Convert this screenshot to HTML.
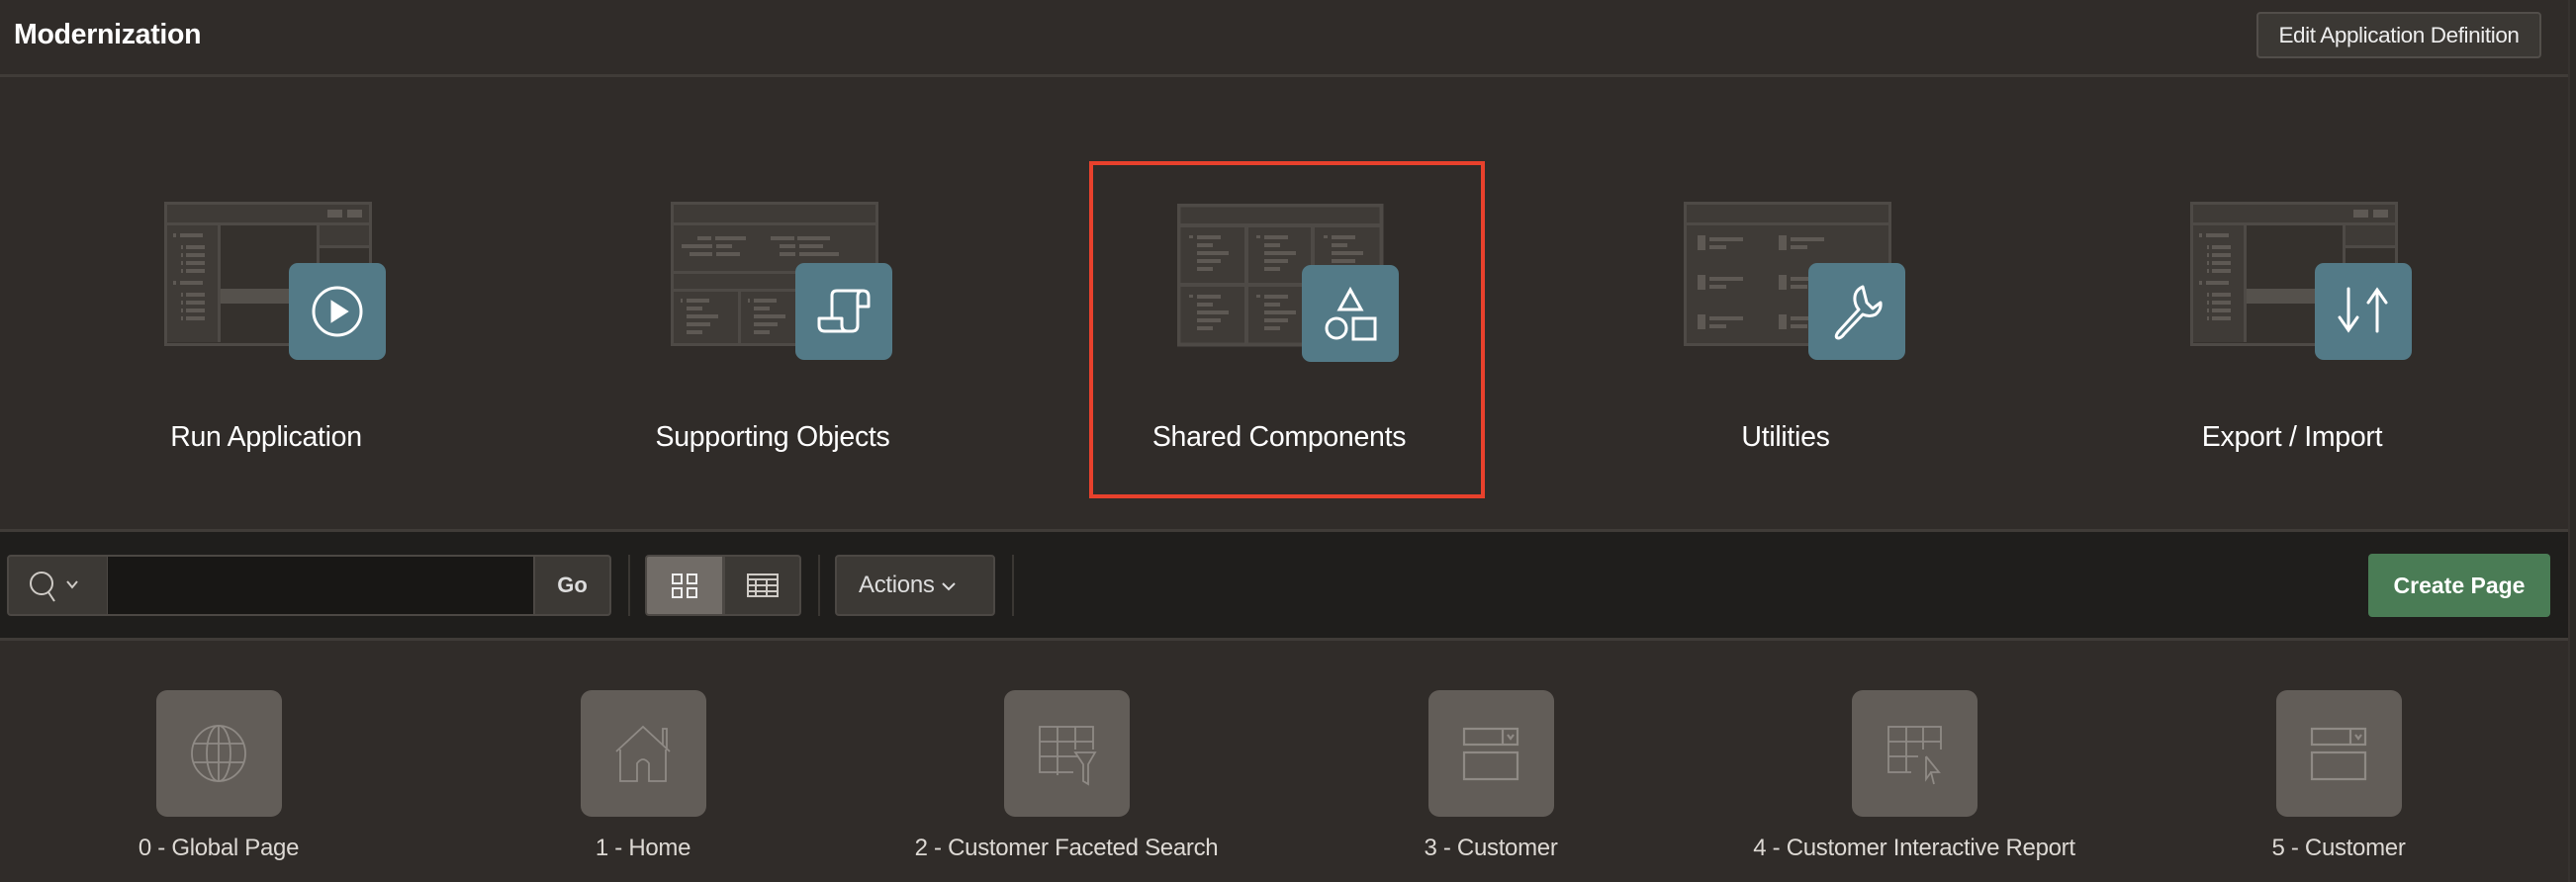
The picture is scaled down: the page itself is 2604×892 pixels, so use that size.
<!DOCTYPE html>
<html><head><meta charset="utf-8"><style>
*{margin:0;padding:0;box-sizing:border-box}
body{width:2604px;height:892px;background:#302c29;font-family:"Liberation Sans",sans-serif;position:relative;overflow:hidden;color:#fff}
.abs{position:absolute}
.hdr-line{left:0;top:75px;width:2596px;height:3px;background:#403c38}
.title{left:14px;top:19px;font-size:28.5px;font-weight:bold;letter-spacing:-0.3px}
.editbtn{left:2281px;top:12px;width:288px;height:47px;background:#3b3834;border:2px solid #524e4a;border-radius:4px;font-size:22.5px;color:#eee;text-align:center;line-height:43px;letter-spacing:-0.4px}
.bigcol{width:512px;top:0}
.bigcol .lbl{position:absolute;top:426px;width:512px;text-align:center;font-size:28.5px;letter-spacing:-0.3px}
.win{position:absolute;left:153px;top:204px}
.tile{position:absolute;left:279px;top:266px;width:98px;height:98px;background:#537a87;border-radius:9px}
.red{left:1101px;top:163px;width:400px;height:341px;border:4px solid #e8412c}
.toolbar{left:0;top:535px;width:2596px;height:113px;background:#1f1e1c;border-top:3px solid #403c38;border-bottom:3px solid #403c38}
.btn{position:absolute;top:561px;height:62px;background:#3c3935;border:2px solid #4c4844;border-radius:4px}
.sep{position:absolute;top:561px;width:2px;height:62px;background:#3a3733}
.pcol{position:absolute;top:698px;width:428px}
.ptile{position:absolute;left:151px;top:0;width:127px;height:128px;background:#625d58;border-radius:11px}
.plbl{position:absolute;top:146px;width:428px;text-align:center;font-size:24px;color:#ddd9d4;letter-spacing:-0.3px}
.scroll{left:2596px;top:0;width:8px;height:892px;background:#2e2b28;border-left:2px solid #36322f}
</style></head><body>
<div class="abs title">Modernization</div>
<div class="abs editbtn">Edit Application Definition</div>
<div class="abs hdr-line"></div>

<!-- Run Application -->
<div class="abs bigcol" style="left:13px">
<svg class="win" width="210" height="146" viewBox="0 0 210 146">
<rect x="1.5" y="1.5" width="207" height="143" fill="#35312d" stroke="#4e4a46" stroke-width="3"/>
<rect x="3" y="3" width="204" height="18" fill="#3f3b37"/><rect x="3" y="21" width="204" height="3" fill="#4e4a46"/>
<rect x="165" y="8" width="15" height="8" fill="#5e5954"/><rect x="185" y="8" width="15" height="8" fill="#5e5954"/>
<rect x="3" y="24" width="51" height="118" fill="#3f3b37"/><rect x="54" y="24" width="3" height="118" fill="#4e4a46"/>
<rect x="154" y="24" width="3" height="118" fill="#4e4a46"/><rect x="157" y="24" width="50" height="20" fill="#3f3b37"/><rect x="157" y="44" width="50" height="3" fill="#4e4a46"/>
<rect x="57" y="88" width="97" height="15" fill="#55514c"/>
<g fill="#5e5954"><rect x="9" y="32" width="3" height="4"/><rect x="16" y="32" width="23" height="4"/><rect x="9" y="80" width="3" height="4"/><rect x="16" y="80" width="23" height="4"/>
<rect x="17" y="44" width="2" height="4"/><rect x="22" y="44" width="19" height="4"/><rect x="17" y="52" width="2" height="4"/><rect x="22" y="52" width="19" height="4"/><rect x="17" y="60" width="2" height="4"/><rect x="22" y="60" width="19" height="4"/><rect x="17" y="68" width="2" height="4"/><rect x="22" y="68" width="19" height="4"/>
<rect x="17" y="92" width="2" height="4"/><rect x="22" y="92" width="19" height="4"/><rect x="17" y="100" width="2" height="4"/><rect x="22" y="100" width="19" height="4"/><rect x="17" y="108" width="2" height="4"/><rect x="22" y="108" width="19" height="4"/><rect x="17" y="116" width="2" height="4"/><rect x="22" y="116" width="19" height="4"/></g>
</svg>
<div class="tile"><svg width="98" height="98" viewBox="0 0 98 98" fill="none" stroke="#fff" stroke-width="3"><circle cx="49" cy="49" r="24"/><path d="M44 40 L58 49 L44 58 Z" fill="#fff"/></svg></div>
<div class="lbl">Run Application</div></div>

<!-- Supporting Objects -->
<div class="abs bigcol" style="left:525px">
<svg class="win" width="210" height="146" viewBox="0 0 210 146">
<rect x="1.5" y="1.5" width="207" height="143" fill="#3f3b37" stroke="#4e4a46" stroke-width="3"/>
<rect x="3" y="21" width="204" height="3" fill="#4e4a46"/><rect x="3" y="70" width="204" height="3" fill="#4e4a46"/><rect x="3" y="88" width="204" height="3" fill="#4e4a46"/><rect x="68" y="91" width="3" height="52" fill="#4e4a46"/>
<g fill="#5e5954"><rect x="27" y="35" width="14" height="4"/><rect x="45" y="35" width="31" height="4"/><rect x="101" y="35" width="24" height="4"/><rect x="128" y="35" width="33" height="4"/>
<rect x="11" y="43" width="31" height="4"/><rect x="46" y="43" width="16" height="4"/><rect x="110" y="43" width="16" height="4"/><rect x="130" y="43" width="24" height="4"/>
<rect x="19" y="51" width="23" height="4"/><rect x="46" y="51" width="24" height="4"/><rect x="110" y="51" width="16" height="4"/><rect x="130" y="51" width="40" height="4"/>
<rect x="10" y="98" width="2" height="4"/><rect x="16" y="98" width="23" height="4"/><rect x="16" y="106" width="16" height="4"/><rect x="16" y="114" width="32" height="4"/><rect x="16" y="122" width="24" height="4"/><rect x="16" y="130" width="16" height="4"/>
<rect x="78" y="98" width="2" height="4"/><rect x="84" y="98" width="23" height="4"/><rect x="84" y="106" width="16" height="4"/><rect x="84" y="114" width="32" height="4"/><rect x="84" y="122" width="24" height="4"/><rect x="84" y="130" width="16" height="4"/></g>
</svg>
<div class="tile"><svg width="98" height="98" viewBox="0 0 98 98" fill="none" stroke="#fff" stroke-width="3" stroke-linejoin="round"><path d="M37 56 V33 Q37 28 42 28 H68 Q74 28 74 34 V44 H63"/><path d="M63 34 Q63 28 68 28"/><path d="M63 34 V63 Q63 69 57 69 H30 Q24 69 24 63 V56 H47 V63 Q47 69 53 69"/></svg></div>
<div class="lbl">Supporting Objects</div></div>

<!-- Shared Components -->
<div class="abs bigcol" style="left:1037px">
<svg class="win" style="top:206px" width="210" height="146" viewBox="0 0 210 146">
<rect x="1.5" y="1.5" width="205" height="141" fill="#3f3b37" stroke="#4e4a46" stroke-width="4"/>
<rect x="3" y="20" width="204" height="4" fill="#4e4a46"/><rect x="3" y="80" width="204" height="4" fill="#4e4a46"/><rect x="68" y="22" width="4" height="120" fill="#4e4a46"/><rect x="135" y="22" width="4" height="120" fill="#4e4a46"/>
<g fill="#5e5954" id="cl"><rect x="12" y="32" width="4" height="3"/><rect x="20" y="32" width="24" height="4"/><rect x="20" y="40" width="16" height="4"/><rect x="20" y="48" width="32" height="4"/><rect x="20" y="56" width="24" height="4"/><rect x="20" y="64" width="16" height="4"/></g>
<use href="#cl" x="68"/><use href="#cl" x="136"/><use href="#cl" y="60"/><use href="#cl" x="68" y="60"/>
</svg>
<div class="tile" style="left:279px;top:268px"><svg width="98" height="98" viewBox="0 0 98 98" fill="none" stroke="#fff" stroke-width="3"><path d="M49 25 L60 45 H38 Z"/><circle cx="35" cy="64" r="10"/><rect x="52" y="54" width="22" height="21"/></svg></div>
<div class="lbl">Shared Components</div></div>

<!-- Utilities -->
<div class="abs bigcol" style="left:1549px">
<svg class="win" width="210" height="146" viewBox="0 0 210 146">
<rect x="1.5" y="1.5" width="207" height="143" fill="#3f3b37" stroke="#4e4a46" stroke-width="3"/>
<rect x="3" y="21" width="204" height="3" fill="#4e4a46"/>
<g fill="#5e5954" id="ur"><rect x="14" y="34" width="8" height="15"/><rect x="26" y="36" width="34" height="4"/><rect x="26" y="44" width="17" height="4"/><rect x="96" y="34" width="8" height="15"/><rect x="108" y="36" width="34" height="4"/><rect x="108" y="44" width="17" height="4"/></g>
<use href="#ur" y="40"/><use href="#ur" y="80"/>
</svg>
<div class="tile"><svg width="98" height="98" viewBox="0 0 98 98" fill="none" stroke="#fff" stroke-width="3" stroke-linejoin="round"><path d="M55 24 Q46 28 47 38 Q48 44 51 47 L30 70 Q26 76 31 76 Q34 75 36 72 L55 52 Q62 55 68 52 Q74 47 73 40 L65 46 L59 40 Z"/></svg></div>
<div class="lbl">Utilities</div></div>

<!-- Export / Import -->
<div class="abs bigcol" style="left:2061px">
<svg class="win" width="210" height="146" viewBox="0 0 210 146">
<rect x="1.5" y="1.5" width="207" height="143" fill="#35312d" stroke="#4e4a46" stroke-width="3"/>
<rect x="3" y="3" width="204" height="18" fill="#3f3b37"/><rect x="3" y="21" width="204" height="3" fill="#4e4a46"/>
<rect x="165" y="8" width="15" height="8" fill="#5e5954"/><rect x="185" y="8" width="15" height="8" fill="#5e5954"/>
<rect x="3" y="24" width="51" height="118" fill="#3f3b37"/><rect x="54" y="24" width="3" height="118" fill="#4e4a46"/>
<rect x="154" y="24" width="3" height="118" fill="#4e4a46"/><rect x="157" y="24" width="50" height="20" fill="#3f3b37"/><rect x="157" y="44" width="50" height="3" fill="#4e4a46"/>
<rect x="57" y="88" width="97" height="15" fill="#55514c"/>
<g fill="#5e5954"><rect x="9" y="32" width="3" height="4"/><rect x="16" y="32" width="23" height="4"/><rect x="9" y="80" width="3" height="4"/><rect x="16" y="80" width="23" height="4"/>
<rect x="17" y="44" width="2" height="4"/><rect x="22" y="44" width="19" height="4"/><rect x="17" y="52" width="2" height="4"/><rect x="22" y="52" width="19" height="4"/><rect x="17" y="60" width="2" height="4"/><rect x="22" y="60" width="19" height="4"/><rect x="17" y="68" width="2" height="4"/><rect x="22" y="68" width="19" height="4"/>
<rect x="17" y="92" width="2" height="4"/><rect x="22" y="92" width="19" height="4"/><rect x="17" y="100" width="2" height="4"/><rect x="22" y="100" width="19" height="4"/><rect x="17" y="108" width="2" height="4"/><rect x="22" y="108" width="19" height="4"/><rect x="17" y="116" width="2" height="4"/><rect x="22" y="116" width="19" height="4"/></g>
</svg>
<div class="tile"><svg width="98" height="98" viewBox="0 0 98 98" fill="none" stroke="#fff" stroke-width="3" stroke-linecap="round"><path d="M34 26 V67 M25 55 L34 68 L43 55"/><path d="M63 69 V27 M54 40 L63 27 L72 40"/></svg></div>
<div class="lbl">Export / Import</div></div>

<div class="abs red"></div>

<!-- toolbar -->
<div class="abs toolbar"></div>
<div class="btn" style="left:7px;width:103px;border-radius:4px 0 0 4px"><svg width="100" height="58" viewBox="0 0 100 58" fill="none" stroke="#cfcbc6" stroke-width="2"><circle cx="33" cy="27" r="11"/><path d="M40 36 L46 45"/><path d="M59 25 L64 31 L69 25"/></svg></div>
<div class="abs" style="left:109px;top:561px;width:431px;height:62px;background:#181715;border-top:2px solid #4c4844;border-bottom:2px solid #4c4844"></div>
<div class="btn" style="left:539px;width:79px;border-radius:0 4px 4px 0;color:#ddd;font-weight:bold;font-size:22px;text-align:center;line-height:58px">Go</div>
<div class="sep" style="left:635px"></div>
<div class="btn" style="left:652px;width:80px;background:#716c67;border-radius:4px 0 0 4px"><svg width="76" height="58" viewBox="0 0 76 58" fill="none" stroke="#eee" stroke-width="2"><rect x="26" y="18" width="9" height="9"/><rect x="41" y="18" width="9" height="9"/><rect x="26" y="32" width="9" height="9"/><rect x="41" y="32" width="9" height="9"/></svg></div>
<div class="btn" style="left:731px;width:79px;border-radius:0 4px 4px 0"><svg width="75" height="58" viewBox="0 0 75 58" fill="none" stroke="#cfcbc6" stroke-width="2"><rect x="23" y="18" width="30" height="22"/><path d="M23 23 H53 M23 29 H53 M23 35 H53 M31 23 V40 M42 23 V40"/></svg></div>
<div class="sep" style="left:827px"></div>
<div class="btn" style="left:844px;width:162px;color:#ddd;font-size:24px;line-height:58px;padding-left:22px;letter-spacing:-0.3px">Actions <svg width="16" height="12" viewBox="0 0 16 12" fill="none" stroke="#ddd" stroke-width="2"><path d="M2 3 L8 9 L14 3"/></svg></div>
<div class="sep" style="left:1023px"></div>
<div class="abs" style="left:2394px;top:560px;width:184px;height:64px;background:#4a7c55;border-radius:4px;font-weight:bold;font-size:23px;text-align:center;line-height:64px;color:#fff">Create Page</div>

<!-- pages -->
<div class="pcol" style="left:7px"><div class="ptile"><svg width="127" height="128" viewBox="0 0 127 128" fill="none" stroke="#8f8a85" stroke-width="1.8"><ellipse cx="63" cy="64" rx="27" ry="28"/><ellipse cx="63" cy="64" rx="12" ry="28"/><path d="M63 36 V92 M37 54 H89 M37 73 H89"/></svg></div><div class="plbl">0 - Global Page</div></div>
<div class="pcol" style="left:436px"><div class="ptile"><svg width="127" height="128" viewBox="0 0 127 128" fill="none" stroke="#8f8a85" stroke-width="1.8"><path d="M36 62 L63 37 L90 62 M83 55 V39 H87 V60 M40 60 V92 H57 V74 Q63 66 69 74 V92 H86 V60"/></svg></div><div class="plbl">1 - Home</div></div>
<div class="pcol" style="left:864px"><div class="ptile"><svg width="127" height="128" viewBox="0 0 127 128" fill="none" stroke="#8f8a85" stroke-width="1.8"><path d="M70 83 H36 V37 H90 V60 M36 52 H90 M36 67 H75 M54 37 V86 M72 37 V60"/><path d="M72 63 H92 L85 75 V95 L80 92 V75 Z"/></svg></div><div class="plbl">2 - Customer Faceted Search</div></div>
<div class="pcol" style="left:1293px"><div class="ptile"><svg width="127" height="128" viewBox="0 0 127 128" fill="none" stroke="#8f8a85" stroke-width="2.2"><rect x="36" y="39" width="54" height="16"/><path d="M75 39 V55 M80 45 L83 49 L86 45"/><rect x="36" y="63" width="54" height="27"/></svg></div><div class="plbl">3 - Customer</div></div>
<div class="pcol" style="left:1721px"><div class="ptile"><svg width="127" height="128" viewBox="0 0 127 128" fill="none" stroke="#8f8a85" stroke-width="1.8"><path d="M60 83 H37 V37 H90 V60 M37 52 H90 M37 67 H67 M55 37 V83 M72 37 V60"/><path d="M75 67 L88 83 L80 83 L83 95 M75 67 V90 L80 83"/></svg></div><div class="plbl">4 - Customer Interactive Report</div></div>
<div class="pcol" style="left:2150px"><div class="ptile"><svg width="127" height="128" viewBox="0 0 127 128" fill="none" stroke="#8f8a85" stroke-width="2.2"><rect x="36" y="39" width="54" height="16"/><path d="M75 39 V55 M80 45 L83 49 L86 45"/><rect x="36" y="63" width="54" height="27"/></svg></div><div class="plbl">5 - Customer</div></div>

<div class="abs scroll"></div>
</body></html>
